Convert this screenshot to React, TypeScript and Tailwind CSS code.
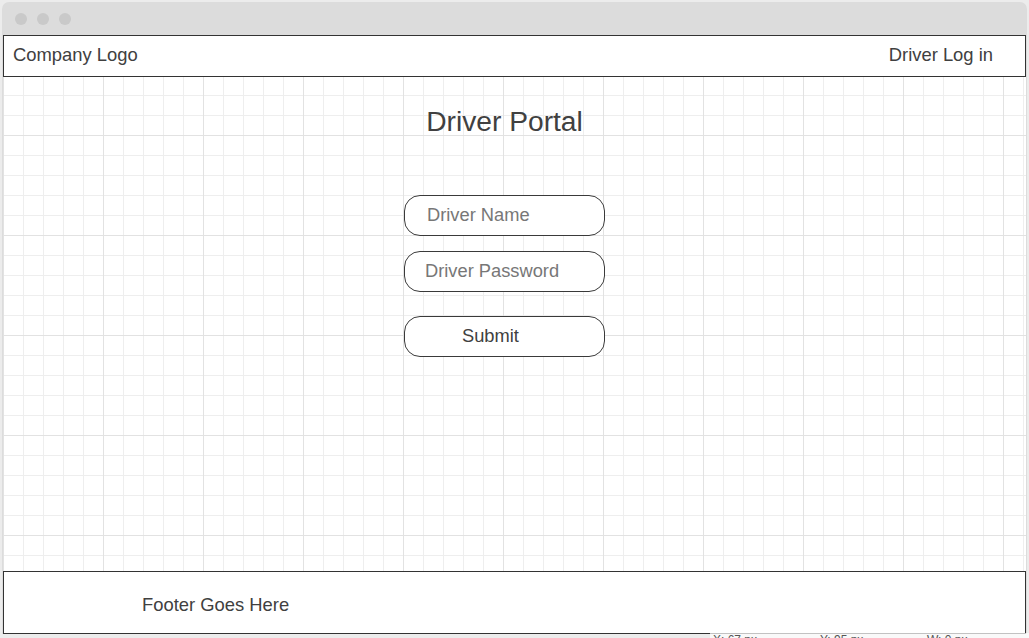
import { FC } from "react";

const font = "font-['Liberation_Sans',Arial,sans-serif]";

const TitleBar: FC = () => (
  <div className="h-[33px] shrink-0 rounded-t-[7px] bg-[#dcdcdc] flex items-center gap-[10px] pl-[13px]">
    <span className="h-[12px] w-[12px] rounded-full bg-[#c9c9c9]" />
    <span className="h-[12px] w-[12px] rounded-full bg-[#c9c9c9]" />
    <span className="h-[12px] w-[12px] rounded-full bg-[#c9c9c9]" />
  </div>
);

const Field: FC<{ placeholder: string; pad: string }> = ({ placeholder, pad }) => (
  <input
    type="text"
    placeholder={placeholder}
    className={`h-[41px] w-[201px] rounded-[16px] border border-[#3a3a3a] bg-white ${pad} pb-[2px] text-[18.3px] text-[#404040] placeholder:text-[#777] outline-none`}
  />
);

export default function App() {
  return (
    <div className={`relative h-[638px] w-full overflow-hidden bg-[#ececec] px-[2px] pt-[2px] pb-[4px] ${font}`}>
      <div className="flex h-full flex-col">
        <TitleBar />
        <div className="flex flex-1 flex-col border-x border-[#dcdcdc] bg-white [background-image:linear-gradient(to_right,#e2e2e2_1px,transparent_1px),linear-gradient(to_bottom,#e2e2e2_1px,transparent_1px),linear-gradient(to_right,#eeeeee_1px,transparent_1px),linear-gradient(to_bottom,#eeeeee_1px,transparent_1px)] [background-size:100px_100px,100px_100px,20px_20px,20px_20px]">
          <header className="flex h-[42px] shrink-0 items-center justify-between border border-[#333] bg-white pb-[2px] pl-[9px] pr-[32px] text-[18.4px] text-[#404040]">
            <span>Company Logo</span>
            <span>Driver Log in</span>
          </header>

          <main className="flex-1 pt-[28px]">
            <div className="ml-[401px] flex w-[201px] flex-col items-center">
              <h1 className="text-[28.2px] leading-8 text-[#404040]">Driver Portal</h1>
              <form
                className="mt-[58px] flex flex-col"
                onSubmit={(e) => e.preventDefault()}
              >
                <Field placeholder="Driver Name" pad="pl-[22px]" />
                <div className="mt-[15px]">
                  <Field placeholder="Driver Password" pad="pl-[20px]" />
                </div>
                <button className="mt-[24px] h-[41px] w-[201px] rounded-[16px] border border-[#3a3a3a] bg-white pb-[1px] pl-[57px] text-left text-[18.3px] text-[#404040]">
                  Submit
                </button>
              </form>
            </div>
          </main>

          <footer className="flex h-[63px] shrink-0 items-center border border-[#333] bg-white pl-[138px] pt-[5px] text-[18.4px] text-[#404040]">
            Footer Goes Here
          </footer>
        </div>
      </div>

      {/* coordinate readout peeking in from below */}
      <div className="absolute left-[710px] top-[633px] flex h-[20px] w-[319px] bg-white/70 pl-[3px] pt-[1px] text-[12px] leading-none text-[#555]">
        <span className="w-[107px]">X: 67 px</span>
        <span className="w-[107px]">Y: 95 px</span>
        <span>W: 0 px</span>
      </div>
    </div>
  );
}
